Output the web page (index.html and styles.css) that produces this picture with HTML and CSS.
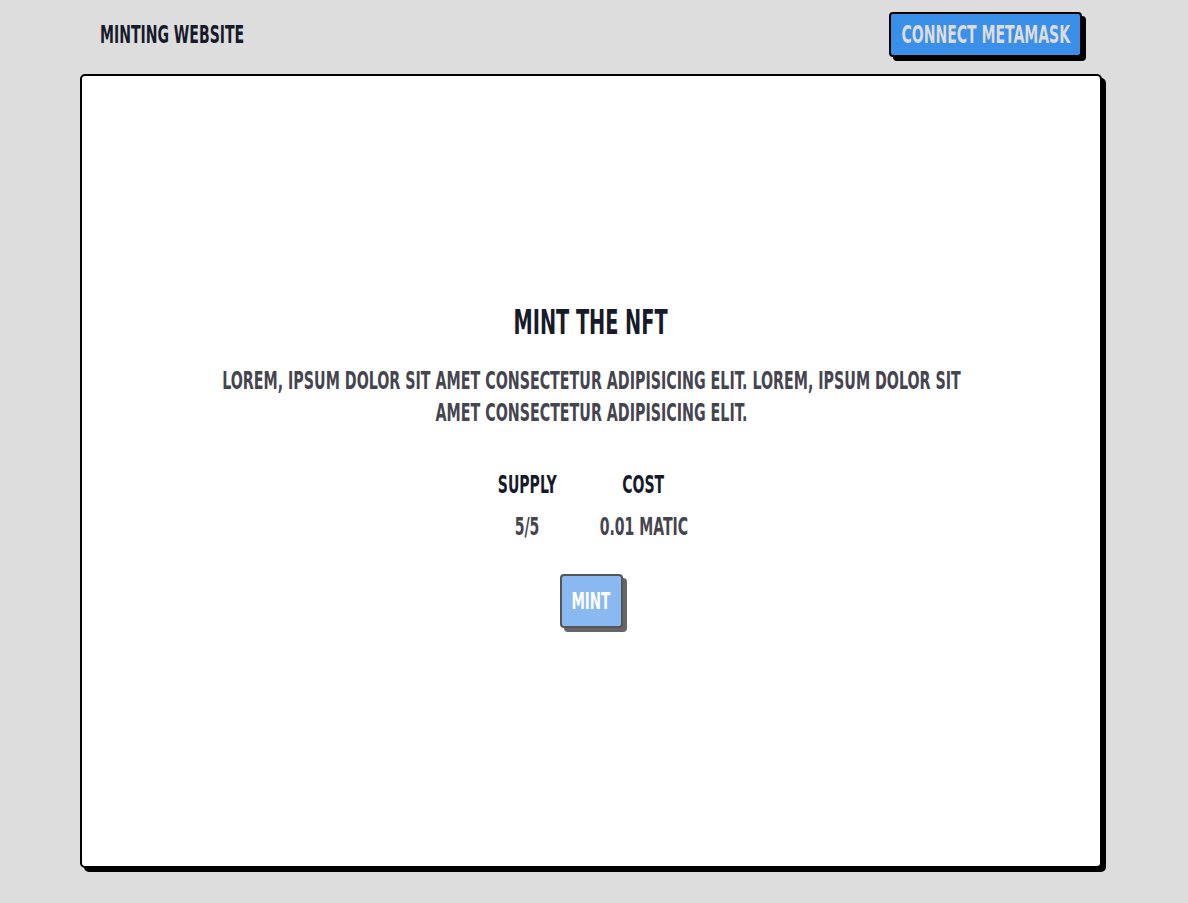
FILE: index.html
```html
<!DOCTYPE html>
<html lang="en">
<head>
<meta charset="utf-8">
<title>Minting Website</title>
<link rel="stylesheet" href="styles.css">
</head>
<body>
<header class="topbar">
  <div class="brand"><span class="cond cond-left">Minting Website</span></div>
  <button class="connect"><span class="cond">Connect Metamask</span></button>
</header>
<main class="card">
  <h1 class="title"><span class="cond">Mint the NFT</span></h1>
  <div class="desc-wrap">
    <p class="desc">Lorem, ipsum dolor sit amet consectetur adipisicing elit. Lorem, ipsum dolor sit amet consectetur adipisicing elit.</p>
  </div>
  <div class="stats">
    <div class="stat stat-supply">
      <div class="stat-label"><span class="cond">Supply</span></div>
      <div class="stat-value"><span class="cond">5/5</span></div>
    </div>
    <div class="stat stat-cost">
      <div class="stat-label"><span class="cond">Cost</span></div>
      <div class="stat-value"><span class="cond">0.01 Matic</span></div>
    </div>
  </div>
  <button class="mint"><span class="cond">Mint</span></button>
</main>
</body>
</html>
```

FILE: styles.css
```css
* { box-sizing: border-box; }
html, body { margin: 0; padding: 0; }
body {
  background: #dddddd;
  font-family: "DejaVu Sans Condensed", "DejaVu Sans", sans-serif;
  font-weight: 700;
  text-transform: uppercase;
  color: #171a2b;
  height: 903px;
  overflow: hidden;
}
.cond {
  display: inline-block;
  white-space: nowrap;
  transform: scaleX(0.65);
  transform-origin: center center;
}
.cond-left { transform-origin: left center; }

.topbar {
  display: flex;
  justify-content: space-between;
  align-items: center;
  padding: 12px 106px 0 100px;
}
.brand {
  font-size: 24px;
  line-height: 26px;
  color: #171a2b;
}
.connect {
  display: flex;
  align-items: center;
  justify-content: center;
  font-family: inherit;
  font-weight: 700;
  text-transform: uppercase;
  font-size: 24px;
  line-height: 26px;
  color: #dcdcdc;
  background: #3a8fe8;
  border: 2px solid #000;
  border-radius: 4px;
  box-shadow: 4px 4px 0 #000;
  width: 193px;
  height: 45px;
  padding: 0;
  cursor: pointer;
}
.card {
  margin: 17px 0 0 80px;
  width: 1022px;
  height: 794px;
  background: #fff;
  border: 2px solid #000;
  border-radius: 5px;
  box-shadow: 4px 4px 0 #000;
  display: flex;
  flex-direction: column;
  align-items: center;
  padding-top: 227px;
}
.title {
  margin: 0;
  font-size: 33px;
  line-height: 40px;
  color: #171a2b;
  display: flex;
  justify-content: center;
}
.desc-wrap {
  margin-top: 22px;
  width: 760px;
  display: flex;
  justify-content: center;
}
.desc {
  margin: 0;
  flex: none;
  width: 1165px;
  text-align: center;
  font-size: 24px;
  line-height: 32px;
  color: #45454f;
  transform: scaleX(0.66);
}
.stats {
  display: flex;
  gap: 42px;
  margin-top: 43px;
}
.stat {
  display: flex;
  flex-direction: column;
  align-items: center;
  gap: 16px;
}
.stat-supply { width: 63px; }
.stat-cost { width: 86px; }
.stat-label {
  font-size: 24px;
  line-height: 26px;
  color: #171a2b;
  display: flex;
  justify-content: center;
  width: 100%;
}
.stat-value {
  font-size: 24px;
  line-height: 26px;
  color: #45454f;
  display: flex;
  justify-content: center;
  width: 100%;
}
.mint {
  margin-top: 34px;
  display: flex;
  align-items: center;
  justify-content: center;
  font-family: inherit;
  font-weight: 700;
  text-transform: uppercase;
  font-size: 23px;
  line-height: 26px;
  color: #ffffff;
  background: #8ab8f0;
  border: 2px solid #555;
  border-radius: 4px;
  box-shadow: 4px 4px 0 #666;
  width: 63px;
  height: 54px;
  padding: 0;
  cursor: pointer;
}
```
